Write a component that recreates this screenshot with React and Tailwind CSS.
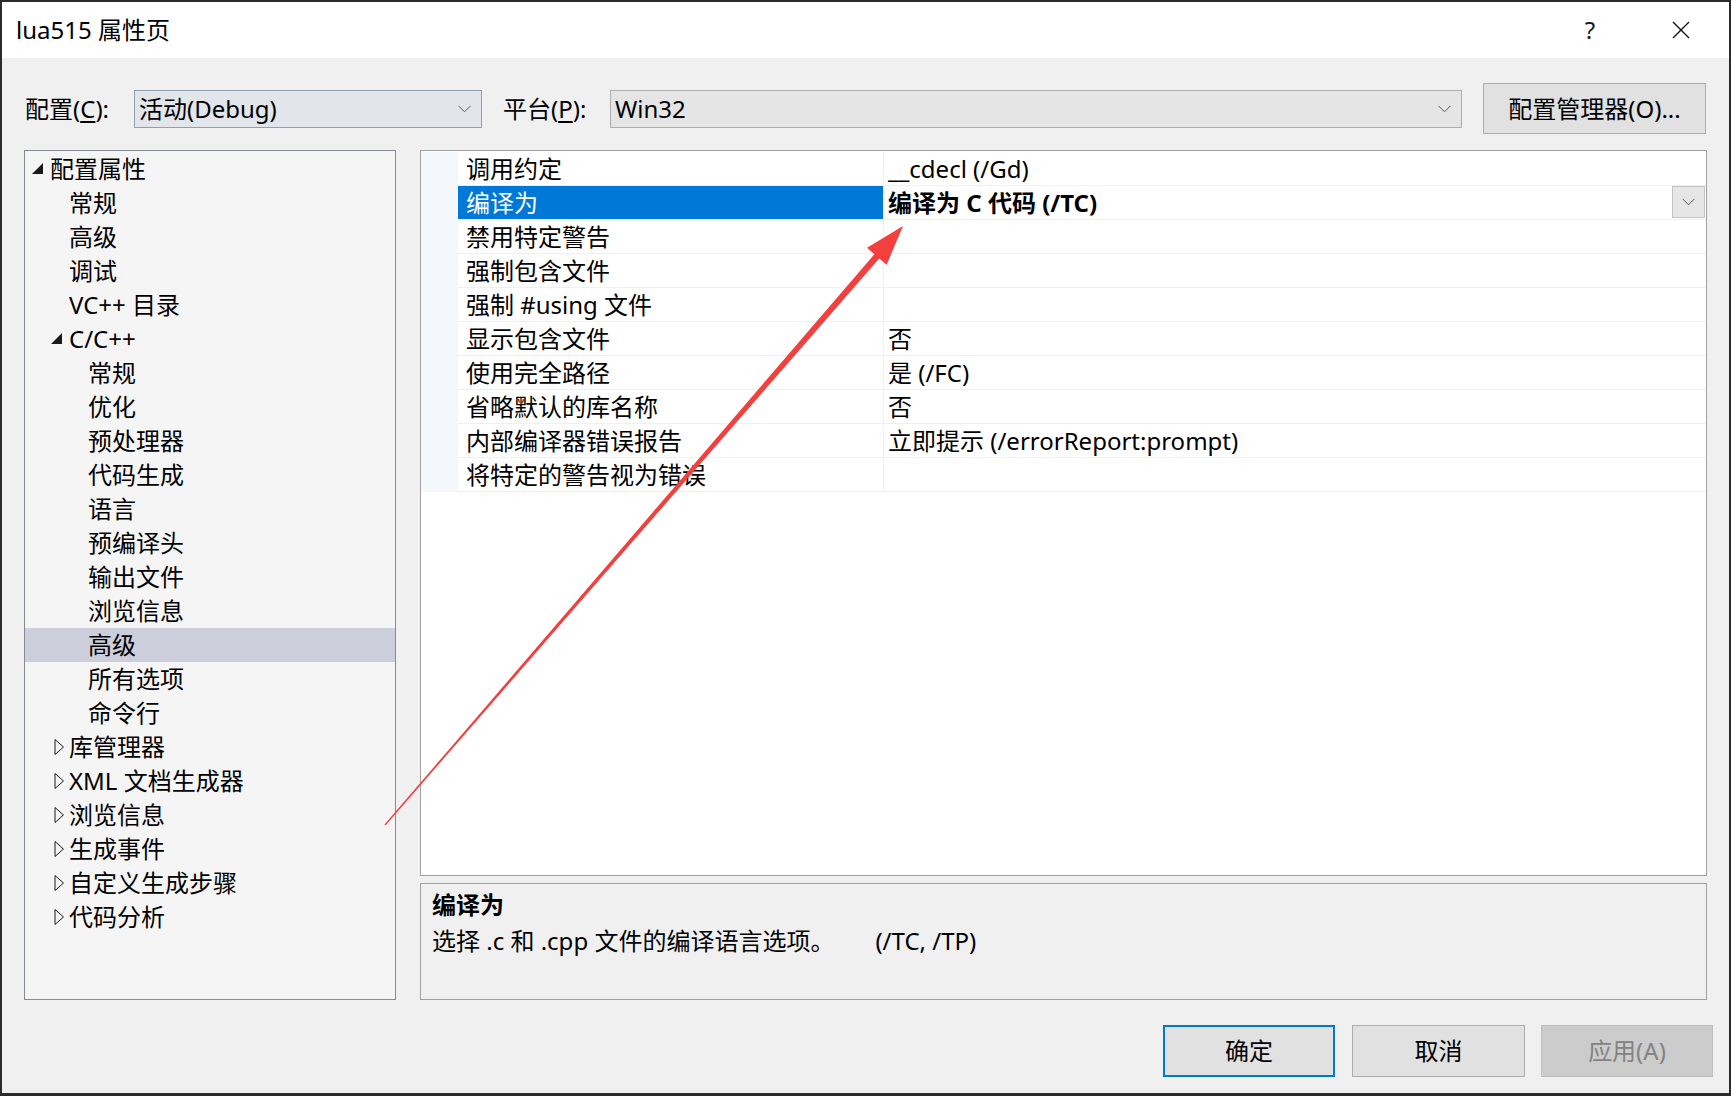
import React from "react";

const treeItems = [
  { label: "配置属性", level: 0, toggle: "open" },
  { label: "常规", level: 1 },
  { label: "高级", level: 1 },
  { label: "调试", level: 1 },
  { label: "VC++ 目录", level: 1 },
  { label: "C/C++", level: 1, toggle: "open" },
  { label: "常规", level: 2 },
  { label: "优化", level: 2 },
  { label: "预处理器", level: 2 },
  { label: "代码生成", level: 2 },
  { label: "语言", level: 2 },
  { label: "预编译头", level: 2 },
  { label: "输出文件", level: 2 },
  { label: "浏览信息", level: 2 },
  { label: "高级", level: 2, selected: true },
  { label: "所有选项", level: 2 },
  { label: "命令行", level: 2 },
  { label: "库管理器", level: 1, toggle: "closed" },
  { label: "XML 文档生成器", level: 1, toggle: "closed" },
  { label: "浏览信息", level: 1, toggle: "closed" },
  { label: "生成事件", level: 1, toggle: "closed" },
  { label: "自定义生成步骤", level: 1, toggle: "closed" },
  { label: "代码分析", level: 1, toggle: "closed" },
];

const levelPad = { 0: "pl-[7px]", 1: "pl-[26px]", 2: "pl-[45px]" };

const props = [
  { name: "调用约定", value: "__cdecl (/Gd)" },
  { name: "编译为", value: "编译为 C 代码 (/TC)", selected: true },
  { name: "禁用特定警告", value: "" },
  { name: "强制包含文件", value: "" },
  { name: "强制 #using 文件", value: "" },
  { name: "显示包含文件", value: "否" },
  { name: "使用完全路径", value: "是 (/FC)" },
  { name: "省略默认的库名称", value: "否" },
  { name: "内部编译器错误报告", value: "立即提示 (/errorReport:prompt)" },
  { name: "将特定的警告视为错误", value: "" },
];

const Chevron = () => (
  <svg width="13" height="8" viewBox="0 0 13 8">
    <path d="M0.5 0.8 L6.5 6.8 L12.5 0.8" fill="none" stroke="#5a5a5a" strokeWidth="1" />
  </svg>
);

const Toggle = ({ type }) => {
  if (type === "open") {
    return (
      <svg width="18" height="18" viewBox="0 0 18 18">
        <polygon points="11,3 11,14 0,14" fill="#1a1a1a" />
      </svg>
    );
  }
  if (type === "closed") {
    return (
      <svg width="18" height="18" viewBox="0 0 18 18">
        <path d="M4 1.5 L12.5 9 L4 16.5 Z" fill="none" stroke="#1a1a1a" strokeWidth="1" />
      </svg>
    );
  }
  return null;
};

const TreeRow = ({ item }) => (
  <div
    className={`flex items-center h-[34px] ${levelPad[item.level]} ${
      item.selected ? "bg-[#cccedb]" : ""
    }`}
  >
    <div className="w-[18px] h-[18px] shrink-0">
      <Toggle type={item.toggle} />
    </div>
    <span className="whitespace-nowrap">{item.label}</span>
  </div>
);

const PropRow = ({ row }) => (
  <div className="flex h-[34px]">
    <div className="w-[37px] shrink-0 bg-[#f4f7fb]" />
    <div
      className={`w-[425px] shrink-0 pl-[8px] flex items-center border-b border-[#f0f0f0] ${
        row.selected ? "bg-[#0078d7] text-white" : ""
      }`}
    >
      {row.name}
    </div>
    <div className="flex-1 flex border-l border-b border-[#f0f0f0] pl-[4px]">
      <span className={`flex items-center ${row.selected ? "font-bold" : ""}`}>{row.value}</span>
      {row.selected && (
        <div className="ml-auto mr-[1px] w-[33px] h-[32px] border border-[#c3c3c3] bg-[#e6e6e6] flex items-center justify-center">
          <Chevron />
        </div>
      )}
    </div>
  </div>
);

export default function App() {
  return (
    <div className="relative w-[1731px] h-[1096px] bg-[#2b2b2b] pt-[2px] pl-[2px] overflow-hidden font-['Noto_Sans','Noto_Sans_CJK_SC',sans-serif] text-[24px] text-black">
      <div className="w-[1727px] h-[1091px] bg-[#f0f0f0] flex flex-col">
        {/* title bar */}
        <div className="h-[56px] bg-white flex items-center shrink-0">
          <span className="pl-[14px]">lua515 属性页</span>
          <div className="ml-auto flex h-full">
            <div className="w-[86px] flex items-center justify-center text-[#1a1a1a]">?</div>
            <div className="w-[96px] flex items-center justify-center">
              <svg width="18" height="18" viewBox="0 0 18 18">
                <path d="M1 1 L17 17 M17 1 L1 17" stroke="#111" strokeWidth="1.4" />
              </svg>
            </div>
          </div>
        </div>

        <div className="px-[22px] flex flex-col">
          {/* configuration row */}
          <div className="mt-[25px] h-[51px] flex items-center">
            <span className="w-[110px] pl-[1px] whitespace-nowrap">
              配置(<span className="underline underline-offset-[3px]">C</span>):
            </span>
            <div className="w-[348px] h-[38px] border border-[#8fa0b5] bg-[#e2e5e9] flex items-center pl-[4px] pr-[10px]">
              <span>活动(Debug)</span>
              <span className="ml-auto flex">
                <Chevron />
              </span>
            </div>
            <span className="ml-[21px] w-[107px] whitespace-nowrap">
              平台(<span className="underline underline-offset-[3px]">P</span>):
            </span>
            <div className="w-[852px] h-[38px] border border-[#adadad] bg-[#e5e5e5] flex items-center pl-[4px] pr-[10px]">
              <span>Win32</span>
              <span className="ml-auto flex">
                <Chevron />
              </span>
            </div>
            <button className="ml-[21px] w-[223px] h-[51px] border border-[#adadad] bg-[#e1e1e1] flex items-center justify-center">
              配置管理器(O)...
            </button>
          </div>

          {/* tree + property grid */}
          <div className="mt-[16px] flex gap-[24px] h-[850px]">
            <div className="w-[372px] h-full border border-[#858a93] bg-[#f5f5f5] pt-[1px]">
              {treeItems.map((item, i) => (
                <TreeRow key={i} item={item} />
              ))}
            </div>

            <div className="w-[1287px] flex flex-col">
              <div className="h-[726px] border border-[#a0a0a0] bg-white pt-[1px]">
                {props.map((row, i) => (
                  <PropRow key={i} row={row} />
                ))}
              </div>
              <div className="mt-[7px] h-[117px] border border-[#a0a0a0] bg-[#f0f0f0] pl-[11px] pt-[3px] leading-[36px]">
                <div className="font-bold">编译为</div>
                <div className="whitespace-nowrap">
                  选择 .c 和 .cpp 文件的编译语言选项。
                  <span className="ml-[41px]">(/TC, /TP)</span>
                </div>
              </div>
            </div>
          </div>
        </div>

        {/* dialog buttons */}
        <div className="mt-[25px] flex justify-end pr-[16px]">
          <button className="w-[172px] h-[52px] border-2 border-[#0078d7] bg-[#e1e1e1] flex items-center justify-center">
            确定
          </button>
          <button className="ml-[17px] w-[173px] h-[52px] border border-[#adadad] bg-[#e1e1e1] flex items-center justify-center">
            取消
          </button>
          <button className="ml-[16px] w-[172px] h-[52px] border border-[#bfbfbf] bg-[#cccccc] text-[#838383] flex items-center justify-center">
            应用(A)
          </button>
        </div>
      </div>

      {/* red annotation arrow drawn over the dialog */}
      <svg className="absolute left-0 top-0 pointer-events-none" width="1731" height="1096">
        <polygon
          points="384.5,824.6 874.4,254.2 867,247.8 903,226 886.6,264.8 879.2,258.4 385.5,825.4"
          fill="#f43f3f"
        />
      </svg>
    </div>
  );
}
